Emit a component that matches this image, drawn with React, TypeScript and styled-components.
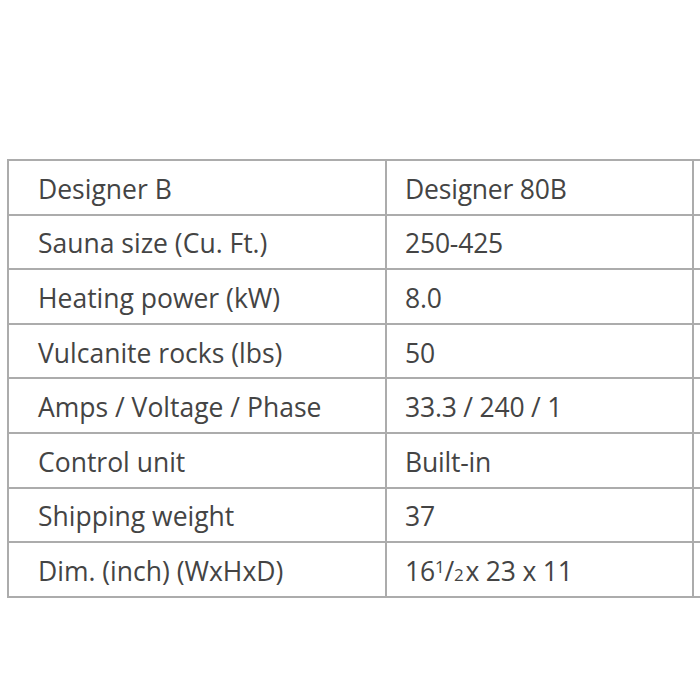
import React from 'react';
import styled, { createGlobalStyle } from 'styled-components';

const GlobalStyle = createGlobalStyle`
  html, body {
    margin: 0;
    padding: 0;
    background: #ffffff;
  }
`;

const rows: [string, string][] = [
  ['Designer B', 'Designer 80B'],
  ['Sauna size (Cu. Ft.)', '250-425'],
  ['Heating power (kW)', '8.0'],
  ['Vulcanite rocks (lbs)', '50'],
  ['Amps / Voltage / Phase', '33.3 / 240 / 1'],
  ['Control unit', 'Built-in'],
  ['Shipping weight', '37'],
  ['Dim. (inch) (WxHxD)', ''],
];

const App = () => {
  return (
    <>
      <GlobalStyle />
      <Page>
        <SpecTable>
          <colgroup>
            <col style={{ width: 378 }} />
            <col style={{ width: 307 }} />
            <col style={{ width: 200 }} />
          </colgroup>
          <tbody>
            {rows.map(([label, value], i) => (
              <Row key={label}>
                <LabelCell>{label}</LabelCell>
                <ValueCell>
                  {i === rows.length - 1 ? (
                    <>
                      16<Sup>1</Sup>/<Sub>2</Sub>x 23 x 11
                    </>
                  ) : (
                    value
                  )}
                </ValueCell>
                <ValueCell />
              </Row>
            ))}
          </tbody>
        </SpecTable>
      </Page>
    </>
  );
};

const Page = styled.div`
  width: 700px;
  height: 700px;
  overflow: hidden;
  padding: 159px 0 0 7px;
  box-sizing: border-box;
  background: #ffffff;
`;

const SpecTable = styled.table`
  border-collapse: collapse;
  table-layout: fixed;
  width: 885px;
  font-family: 'Open Sans', 'Noto Sans', sans-serif;
  font-size: 26.5px;
  color: #444444;
`;

const Row = styled.tr`
  height: 54.6px;
`;

const LabelCell = styled.td`
  border: 2px solid #acacac;
  padding: 3px 0 0 29px;
  white-space: nowrap;
  letter-spacing: 0;
`;

const ValueCell = styled.td`
  border: 2px solid #acacac;
  padding: 3px 0 0 18px;
  white-space: nowrap;
  letter-spacing: -0.2px;
`;

const Sup = styled.span`
  font-size: 17px;
  vertical-align: 8px;
`;

const Sub = styled.span`
  font-size: 17px;
  margin-right: 2px;
`;

export default App;
